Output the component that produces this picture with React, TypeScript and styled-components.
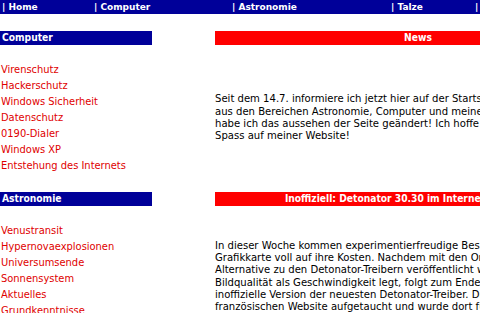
import styled, { createGlobalStyle } from 'styled-components'

const GlobalStyle = createGlobalStyle`
  html, body {
    margin: 0;
    padding: 0;
    background: #ffffff;
    overflow: hidden;
  }
  body {
    font-family: "DejaVu Sans Condensed", "DejaVu Sans", sans-serif;
    font-size: 11px;
    color: #000000;
  }
`

const NAVY = '#000099'
const RED = '#ff0000'

/** obere Navigationsleiste */
const NavBar = styled.nav`
  display: grid;
  grid-template-columns: 92px 138px 159px 84px auto;
  height: 14px;
  padding-left: 2px;
  background: ${NAVY};
  align-items: center;
`

const NavItem = styled.a`
  font-family: "DejaVu Sans", sans-serif;
  font-size: 9px;
  font-weight: bold;
  color: #ffffff;
  text-decoration: none;
  white-space: nowrap;
  line-height: 14px;
`

const Page = styled.main`
  display: flex;
  flex-direction: column;
  gap: 18px;
  padding-top: 17px;
`

const Section = styled.section`
  display: grid;
  grid-template-columns: 152px 406px;
  column-gap: 63px;
  row-gap: 17px;
  align-items: center;
`

const SectionHead = styled.div<{ $variant: 'side' | 'main' }>`
  height: 14px;
  line-height: 14px;
  padding: 0 2px;
  font-weight: bold;
  font-size: 10.2px;
  color: #ffffff;
  white-space: nowrap;
  background: ${({ $variant }) => ($variant === 'side' ? NAVY : RED)};
  text-align: ${({ $variant }) => ($variant === 'side' ? 'left' : 'center')};
`

const LinkList = styled.ul`
  list-style: none;
  margin: 0;
  padding: 0;
`

const LinkItem = styled.li`
  line-height: 16px;
  white-space: nowrap;
  padding-left: 1px;

  a {
    color: #e00000;
    text-decoration: none;
  }
`

const Text = styled.p`
  margin: 0;
  font-size: 11.2px;
  line-height: 12.3px;
  white-space: nowrap;
`

interface Block {
  side: string
  title: string
  links: string[]
  lines: string[]
}

const blocks: Block[] = [
  {
    side: 'Computer',
    title: 'News',
    links: [
      'Virenschutz',
      'Hackerschutz',
      'Windows Sicherheit',
      'Datenschutz',
      '0190-Dialer',
      'Windows XP',
      'Entstehung des Internets',
    ],
    lines: [
      'Seit dem 14.7. informiere ich jetzt hier auf der Startseite über Neuigkeiten',
      'aus den Bereichen Astronomie, Computer und meinem Leben. Außerdem',
      'habe ich das aussehen der Seite geändert! Ich hoffe ihr habt viel',
      'Spass auf meiner Website!',
    ],
  },
  {
    side: 'Astronomie',
    title: 'Inoffiziell: Detonator 30.30 im Internet aufgetaucht',
    links: [
      'Venustransit',
      'Hypernovaexplosionen',
      'Universumsende',
      'Sonnensystem',
      'Aktuelles',
      'Grundkenntnisse',
      'Sternbilder',
      'Teleskope',
      'Links',
    ],
    lines: [
      'In dieser Woche kommen experimentierfreudige Besitzer einer GeForce-',
      'Grafikkarte voll auf ihre Kosten. Nachdem mit den Omega-Treibern eine',
      'Alternative zu den Detonator-Treibern veröffentlicht wurde, die mehr Wert auf',
      'Bildqualität als Geschwindigkeit legt, folgt zum Ende der Woche eine',
      'inoffizielle Version der neuesten Detonator-Treiber. Diese ist auf einer',
      'französischen Website aufgetaucht und wurde dort für Windows XP',
      'bereitgestellt. Die Treiber sollen vor allem bei neueren Spielen',
      'deutlich mehr Leistung bringen. Ein Test folgt in den nächsten',
      'Tagen hier auf meiner Website.',
    ],
  },
]

const navItems = ['Home', 'Computer', 'Astronomie', 'Talze', '']

export default function App() {
  return (
    <>
      <GlobalStyle />
      <NavBar>
        {navItems.map((item, i) => (
          <NavItem key={i} href="#">
            | {item}
          </NavItem>
        ))}
      </NavBar>
      <Page>
        {blocks.map((block) => (
          <Section key={block.side}>
            <SectionHead $variant="side">{block.side}</SectionHead>
            <SectionHead $variant="main">{block.title}</SectionHead>
            <LinkList>
              {block.links.map((link) => (
                <LinkItem key={link}>
                  <a href="#">{link}</a>
                </LinkItem>
              ))}
            </LinkList>
            <Text>
              {block.lines.map((line, i) => (
                <span key={i}>
                  {line}
                  {i < block.lines.length - 1 && <br />}
                </span>
              ))}
            </Text>
          </Section>
        ))}
      </Page>
    </>
  )
}
